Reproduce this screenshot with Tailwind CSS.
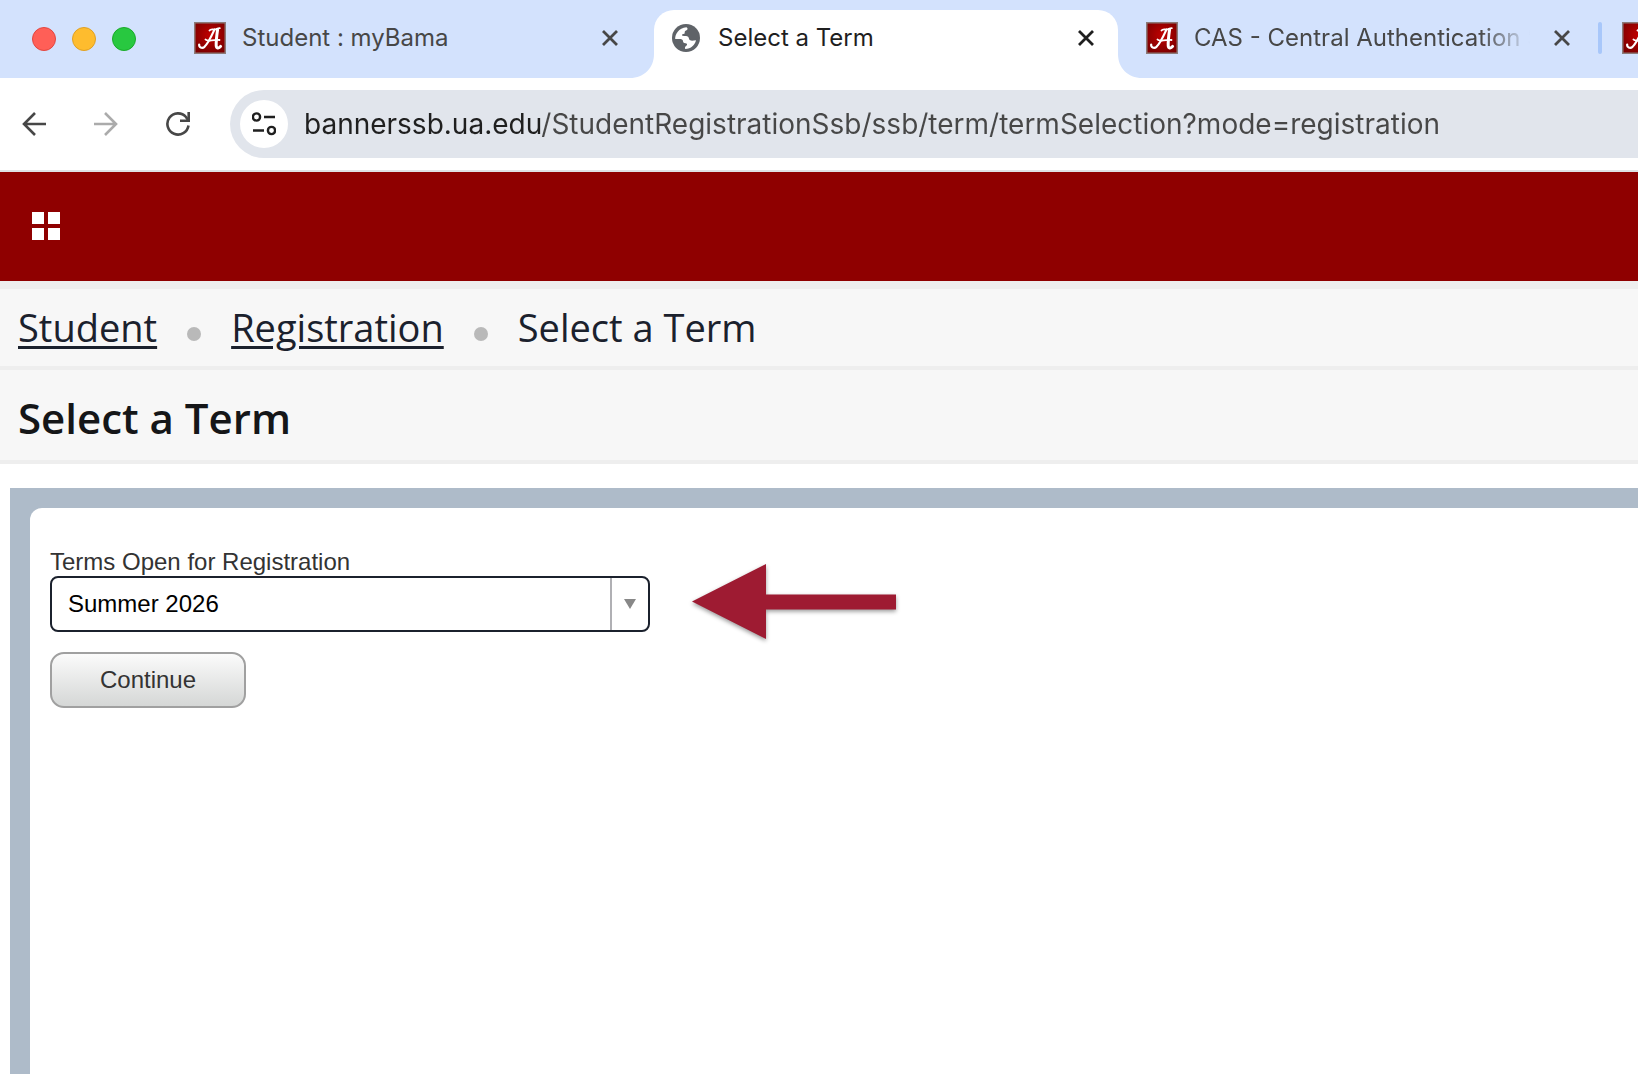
<!DOCTYPE html>
<html lang="en">
<head>
<meta charset="utf-8">
<meta name="viewport" content="width=device-width, initial-scale=1">
<title>Select a Term</title>
<script src="https://cdn.jsdelivr.net/npm/@tailwindcss/browser@4"></script>
</head>
<body class="min-h-screen flex flex-col overflow-x-hidden bg-white">

<svg class="absolute size-0" aria-hidden="true">
  <defs>
    <radialGradient id="crimson" cx="50%" cy="40%" r="65%">
      <stop offset="0" stop-color="#c00000"/>
      <stop offset="1" stop-color="#7d0000"/>
    </radialGradient>
  </defs>
  <symbol id="crest" viewBox="0 0 32 32">
    <rect width="32" height="32" fill="#8c7a78"/>
    <rect x="1.5" y="1.5" width="29" height="29" fill="url(#crimson)"/>
    <g fill="none" stroke="#fff" stroke-linecap="round" stroke-linejoin="round">
      <path stroke-width="1.8" d="M15.5 8.6C17 6.3 19.500 8.300 22 7.200C23.500 6.600 24.500 6.200 25.800 6.200"/>
      <path stroke-width="2.200" d="M20.500 7.500C17.500 14 14.500 21 10.500 24.800C8 27 4.800 25.300 5.200 22.500"/>
      <path stroke-width="3" d="M23.600 7.500C22.800 13 22 18.500 22.200 23.500C22.300 26.400 24.800 26.700 26.600 24.400"/>
      <path stroke-width="1.800" d="M11.500 17.500C13 20 18 17.500 25.500 18"/>
    </g>
  </symbol>
  <symbol id="cross" viewBox="0 0 24 24">
    <path d="M5 5L19 19M19 5L5 19" fill="none" stroke="currentColor" stroke-width="2.800"/>
  </symbol>
</svg>

<header class="font-['Inter',sans-serif]">
  <div class="flex h-[78px] overflow-hidden bg-[#d3e2fd]">
    <div class="flex w-[172px] shrink-0 items-center gap-4 pl-8">
      <button aria-label="Close window" class="size-6 rounded-full border border-[#e2463f] bg-[#ff5f57]"></button>
      <button aria-label="Minimize window" class="size-6 rounded-full border border-[#e0a023] bg-[#febc2e]"></button>
      <button aria-label="Zoom window" class="size-6 rounded-full border border-[#1aab29] bg-[#28c840]"></button>
    </div>

    <div class="flex w-[476px] shrink-0 items-center pr-[26px] pb-[2px] pl-[22px] text-[#474747]">
      <svg class="size-8 shrink-0"><use href="#crest"/></svg>
      <a href="#" class="ml-4 min-w-0 flex-1 overflow-hidden text-2xl whitespace-nowrap">Student : myBama</a>
      <button aria-label="Close tab" class="ml-5 size-6"><svg class="size-6"><use href="#cross"/></svg></button>
    </div>

    <div class="flex w-[476px] shrink-0 px-[6px] pt-[10px] text-[#1f1f1f]">
      <div class="relative flex flex-1 items-center rounded-t-[20px] bg-white pr-5 pb-3 pl-4">
        <svg class="absolute bottom-0 -left-6 size-6" viewBox="0 0 24 24"><path d="M24 0V24H0C14 24 24 14 24 0Z" fill="#fff"/></svg>
        <svg class="absolute -right-6 bottom-0 size-6" viewBox="0 0 24 24"><path d="M0 0V24H24C10 24 0 14 0 0Z" fill="#fff"/></svg>
        <svg class="size-8 shrink-0" viewBox="0 0 32 32">
          <circle cx="16" cy="16" r="14" fill="#5f6368"/>
          <path d="M5.200 17C5 12 8.500 6.200 16.500 5.200C18 6 17.800 7.500 16.500 8.300C15 9 14.600 9.600 14.700 11.200C14.700 12 12 11.800 12 13C12 14.200 15 13.800 17 14.200C19 14.700 18.800 16.500 19.300 17.600C20 19 22.500 18.700 26 18.300C25 23 21 27 15.200 27C14.600 25.500 15.200 24.500 16.600 23.600C17.600 22.600 17 21.400 15.500 21.300C13.300 21.200 13.200 20.300 13 19C12.800 17.600 11.500 17 9.500 17Z" fill="#fff"/>
        </svg>
        <a href="#" aria-current="page" class="ml-4 min-w-0 flex-1 overflow-hidden text-2xl whitespace-nowrap">Select a Term</a>
        <button aria-label="Close tab" class="ml-5 size-6"><svg class="size-6"><use href="#cross"/></svg></button>
      </div>
    </div>

    <div class="flex w-[476px] shrink-0 items-center pr-[26px] pb-[2px] pl-[22px] text-[#474747]">
      <svg class="size-8 shrink-0"><use href="#crest"/></svg>
      <a href="#" class="ml-4 min-w-0 flex-1 overflow-hidden text-2xl whitespace-nowrap [mask-image:linear-gradient(to_right,#000_85%,transparent)]">CAS - Central Authentication Service</a>
      <button aria-label="Close tab" class="ml-5 size-6"><svg class="size-6"><use href="#cross"/></svg></button>
    </div>

    <div class="-ml-[2px] flex shrink-0 items-center gap-5 pb-[2px]">
      <span class="h-8 w-1 rounded-full bg-[#a8c7fa]"></span>
      <svg class="size-8 shrink-0"><use href="#crest"/></svg>
    </div>
  </div>

  <div class="flex h-[94px] items-center border-b-2 border-[#dfe1e4] bg-white pl-[22px]">
    <div class="flex w-[208px] shrink-0 gap-12 text-[#474747]">
      <button aria-label="Back" class="size-6"><svg class="size-6" viewBox="0 0 24 24" fill="none" stroke="currentColor" stroke-width="2.600"><path d="M24 12H2M13 1L2 12L13 23"/></svg></button>
      <button aria-label="Forward" class="size-6 text-[#ababab]"><svg class="size-6" viewBox="0 0 24 24" fill="none" stroke="currentColor" stroke-width="2.600"><path d="M0 12H22M11 1L22 12L11 23"/></svg></button>
      <button aria-label="Reload" class="size-6"><svg class="size-6" viewBox="0 0 24 24" fill="none" stroke="currentColor" stroke-width="2.600"><path d="M22.500 13.500A10.600 10.600 0 1 1 20 5L22 8"/><path d="M22.700 0V8.700H14"/></svg></button>
    </div>
    <div class="flex h-[68px] min-w-0 flex-1 items-center rounded-l-full bg-[#e1e5ec] pl-[10px]">
      <button aria-label="View site information" class="flex size-12 shrink-0 items-center justify-center rounded-full bg-white text-[#1f1f1f]">
        <svg class="size-6" viewBox="0 0 24 24" fill="none" stroke="currentColor" stroke-width="2.400"><circle cx="4.500" cy="5" r="3.600"/><path d="M12 5H23M1 18.500H12"/><circle cx="19.500" cy="18.500" r="3.600"/></svg>
      </button>
      <input type="text" aria-label="Address" value="bannerssb.ua.edu/StudentRegistrationSsb/ssb/term/termSelection?mode=registration" class="ml-4 h-12 min-w-0 flex-1 bg-[linear-gradient(to_right,#1f1f1f_237px,#474747_237px)] bg-clip-text text-[28px] text-[#474747] outline-none [-webkit-text-fill-color:transparent]">
    </div>
  </div>
</header>

<div class="flex h-[109px] items-center bg-[#8f0000] pb-[2px] pl-8">
  <button aria-label="Menu" class="size-7 text-white">
    <svg class="size-7" viewBox="0 0 28 28" fill="currentColor"><path d="M0 0H12V12H0ZM16 0H28V12H16ZM0 16H12V28H0ZM16 16H28V28H16Z"/></svg>
  </button>
</div>

<nav aria-label="Breadcrumb" class="flex h-[89px] items-center border-t-8 border-b-4 border-[#eeeeee] bg-[#f7f7f7] pl-[18px] font-['Open_Sans',sans-serif] text-[38px] whitespace-nowrap text-[#1b212d]">
  <a href="#" class="underline decoration-3 underline-offset-4">Student</a>
  <span class="mx-[30px] mt-3 size-[14px] rounded-full bg-[#b9b9b9]"></span>
  <a href="#" class="underline decoration-3 underline-offset-4">Registration</a>
  <span class="mx-[30px] mt-3 size-[14px] rounded-full bg-[#b9b9b9]"></span>
  <span>Select a Term</span>
</nav>

<div class="flex h-[94px] items-center border-b-4 border-[#eeeeee] bg-[#f7f7f7] pt-1 pl-[18px]">
  <h1 class="font-['Open_Sans',sans-serif] text-[42px] font-semibold text-[#151618]">Select a Term</h1>
</div>

<main class="mt-6 ml-[10px] flex flex-1 flex-col bg-[#aebbc9] pt-5 pl-5 font-['Liberation_Sans',Arial,sans-serif] text-2xl">
  <form class="flex-1 rounded-tl-xl bg-white pt-10 pl-5">
    <label for="term" class="block h-7 leading-7 text-[#333333]">Terms Open for Registration</label>
    <div class="flex items-center gap-[42px]">
      <div class="relative w-[600px]">
        <select id="term" class="h-14 w-full appearance-none rounded-lg border-2 border-[#1b212d] bg-white pr-12 pl-4 text-black">
          <option>Summer 2026</option>
        </select>
        <span class="pointer-events-none absolute inset-y-[2px] right-[2px] flex w-[38px] items-center justify-center border-l-2 border-[#b0b0b4]">
          <svg class="h-[10px] w-3" viewBox="0 0 12 10"><path d="M0 0H12L6 10Z" fill="#888888"/></svg>
        </span>
      </div>
      <svg class="-my-4 h-[84px] w-[212px] shrink-0 drop-shadow-[0_2px_2px_rgba(0,0,0,0.4)]" viewBox="0 0 212 84" aria-hidden="true"><path d="M0 39.500L74 2V32.500H204V47.500H74V77Z" fill="#9e1b32"/></svg>
    </div>
    <button type="button" class="mt-5 block h-14 w-[196px] rounded-[14px] border-2 border-[#a0a0a0] bg-linear-to-b from-[#fbfbfb] to-[#d5d7d6] text-[#333333]">Continue</button>
  </form>
</main>

</body>
</html>
